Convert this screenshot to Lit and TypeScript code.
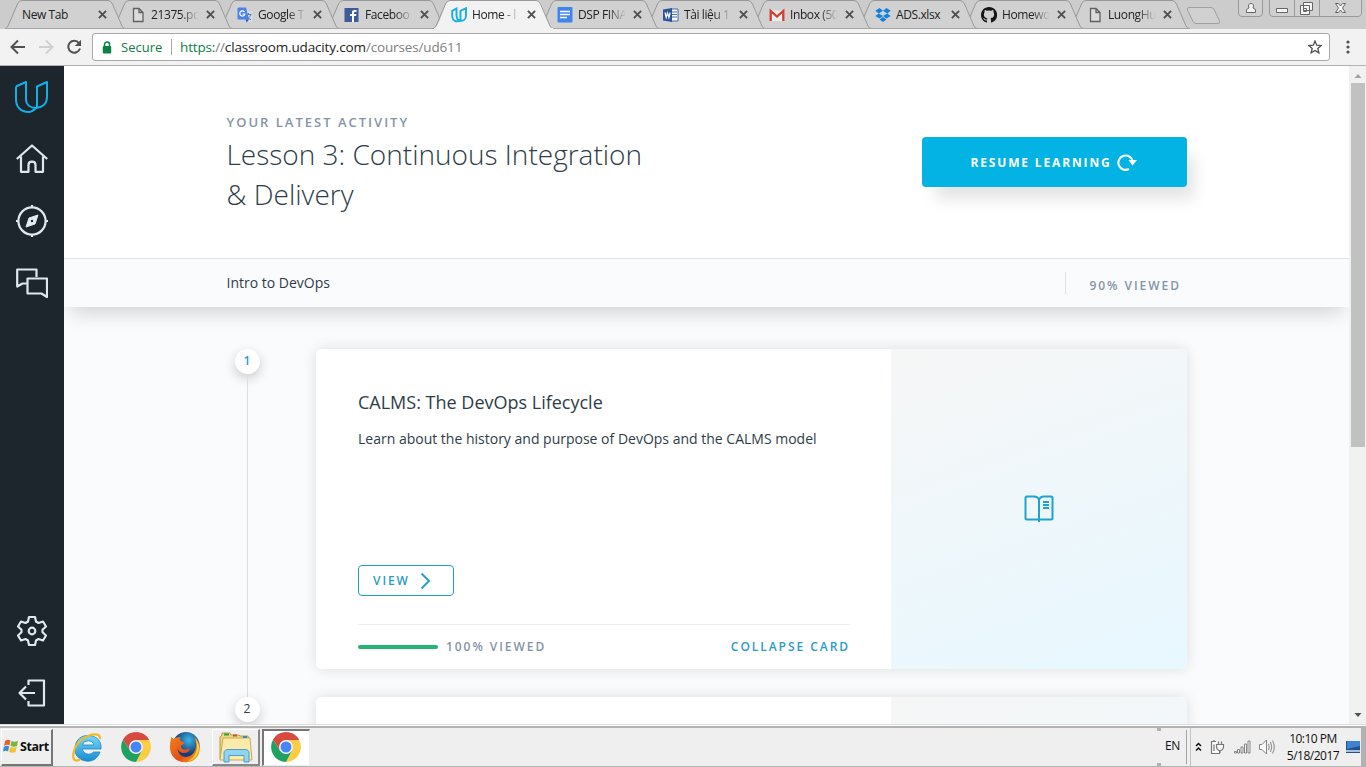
import { LitElement, html, svg, css } from "lit";
import { customElement } from "lit/decorators.js";
import { classMap } from "lit/directives/class-map.js";
import { styleMap } from "lit/directives/style-map.js";

const closeIcon = html`<svg width="9" height="9" viewBox="0 0 9 9"><path d="M.9 .9L8.1 8.1M8.1 .9L.9 8.1" stroke="#4f4f4f" stroke-width="1.9"/></svg>`;

const favicons = {
  page: svg`<path d="M3.500 1.500H9L13 5.500V14.500H3.500ZM9 1.500V5.500H13" fill="#dcdcdc" stroke="#616161" stroke-width="1.300"/>`,
  translate: svg`<path d="M6 4h8.500a1 1 0 0 1 1 1v10H9z" fill="#d5dce4"/><path d="M8.500 7.500h6M11.500 6v1.500M13.500 8c-.6 2-2.500 3.500-4 4.500M10 9c.8 2 2.400 3 4 3.700" stroke="#607d9b" fill="none"/><path d="M1.500 .5H9l3 12H1.500a1 1 0 0 1-1-1v-10z" fill="#4a83ee"/><path d="M8.500 12.500H12L9.700 15.500z" fill="#2757c0"/><path d="M7.400 4.800A2.600 2.600 0 1 0 7.900 7H5.500" stroke="#fff" stroke-width="1.200" fill="none"/>`,
  facebook: svg`<path d="M.5 1h14v14H.5z" fill="#3f5b99"/><path d="M8 15V9H6V7h2V5.500C8 3.700 9 3 10.500 3H12.500V5H11c-.7 0-1 .3-1 1v1h2.400L12 9H10v6z" fill="#fff"/>`,
  udacity: svg`<path d="M1.200 3.800L5.500 1.500V8.200Q5.600 13.600 10 13.600Q2 16 1.200 9.500ZM9.500 3.800L15 1.200V8.500C15 12.500 12 14.500 9.500 13.500Z" fill="none" stroke="#18b0dd" stroke-width="1.900"/>`,
  docs: svg`<rect x=".5" y="0" width="15" height="15.500" rx="1" fill="#4284ee"/><path d="M3 4.500h10M3 7.500h10M3 10.500h7" stroke="#fff" stroke-width="1.300"/>`,
  word: svg`<path d="M8 2h7v12H8z" fill="#fff" stroke="#3e6cb5"/><path d="M9 5h5M9 7.500h5M9 10h5" stroke="#3e6cb5"/><path d="M0 2.500L9 1v14L0 13.500z" fill="#2a5699"/><path d="M2 5.500L3.200 10.500L4.500 6L5.900 10.500L7.200 5.500" fill="none" stroke="#fff" stroke-width="1.200"/>`,
  gmail: svg`<path d="M1 3.500h14v10.500H1z" fill="#ececec"/><path d="M1.700 14V4L8 9.500L14.300 4V14" stroke="#d23f31" stroke-width="2.300" fill="none"/>`,
  dropbox: svg`<g fill="#1081de"><path d="M4.500 1L8 3.800L3.800 6.400L.3 3.700ZM11.500 1L8 3.800L12.200 6.400L15.700 3.700ZM.3 9L3.800 6.400L8 9L4.500 11.600ZM15.700 9L12.200 6.400L8 9L11.500 11.600ZM4.600 12.500L8 9.900L11.400 12.500L8 15Z"/></g>`,
  github: svg`<path fill="#161616" d="M8 0C3.580 0 0 3.580 0 8c0 3.540 2.290 6.530 5.470 7.590.4.070.55-.17.55-.38V13.500c-2.230.5-2.700-.9-2.700-.9-.4-.9-.9-1.200-.9-1.200-.7-.5.1-.5.1-.5.800.1 1.200.8 1.200.8.700 1.300 1.900.9 2.300.7.100-.5.300-.9.500-1.100-1.800-.2-3.600-.9-3.600-4 0-.9.300-1.600.8-2.200-.1-.2-.4-1 .1-2.100 0 0 .7-.2 2.200.8a7.600 7.600 0 0 1 4 0c1.500-1 2.200-.8 2.200-.8.400 1.100.2 1.900.1 2.100.5.600.8 1.300.8 2.200 0 3.100-1.900 3.700-3.700 3.900.3.300.6.800.6 1.500v2.500c0 .2.100.5.600.4A8 8 0 0 0 8 0z"/>`,
};

type Favicon = keyof typeof favicons;
interface Tab { label: string; icon?: Favicon; width: number; active?: boolean }

const tabs: Tab[] = [
  { label: "New Tab", width: 107 },
  { label: "21375.pc", icon: "page", width: 107 },
  { label: "Google T", icon: "translate", width: 107 },
  { label: "Faceboo", icon: "facebook", width: 107 },
  { label: "Home - l", icon: "udacity", width: 106, active: true },
  { label: "DSP FINA", icon: "docs", width: 106 },
  { label: "Tài liệu 1", icon: "word", width: 106 },
  { label: "Inbox (50", icon: "gmail", width: 106 },
  { label: "ADS.xlsx", icon: "dropbox", width: 106 },
  { label: "Homewo", icon: "github", width: 106 },
  { label: "LuongHu", icon: "page", width: 120 },
];

const sideIcons = {
  home: svg`<path d="M.8 16L16 2.500L31.200 16M5 13.500V28.800H12.500V22C12.500 17.500 19.500 17.500 19.500 22V28.800H27V13.500"/>`,
  compass: svg`<circle cx="16" cy="16" r="13.600"/><path d="M16 0V3M16 29V32M0 16H3M29 16H32"/><path d="M22 10L19 19L10 22L13 13Z" fill="#e6edf2" stroke-width="1"/><circle cx="16" cy="16" r="1.200" fill="#1d262d" stroke="none"/>`,
  chat: svg`<path d="M11 16.500H6.500L1.200 19.500V2.500H20.500V10M11.500 11.500H31V30L25.500 26.500H11.500Z"/>`,
  gear: svg`<path d="M13 2h6l1 4.500 2.500 1.500 4.500-1.500 3 5-3.500 3.200v2.600l3.500 3.200-3 5-4.500-1.500-2.500 1.500-1 4.500h-6l-1-4.500-2.500-1.500-4.500 1.500-3-5 3.500-3.200v-2.600l-3.500-3.200 3-5 4.500 1.500 2.500-1.500z"/><circle cx="16" cy="16" r="3.300"/>`,
  exit: svg`<path d="M12.500 8V3.500H28V28.500H12.500V24M19 16H4M10 9.500L3.500 16L10 22.500"/>`,
};
const sideIcon = (name: keyof typeof sideIcons) => html`<svg width="32" height="32" viewBox="0 0 32 32" fill="none" stroke="#e0e8ee" stroke-width="2.200" stroke-linejoin="round">${sideIcons[name]}</svg>`;

const chromeIcon = html`<svg width="30" height="30" viewBox="0 0 30 30"><path d="M15 15L2.100 7.500A15 15 0 0 1 27.900 7.500Z" fill="#d84a3f"/><path d="M15 8H28.200A15 15 0 0 1 15 30L21 18.500Z" fill="#fccd42"/><path d="M2.100 7.500L9 18.500L15 22L21 18.500L15 30A15 15 0 0 1 2.100 7.500" fill="#1fa160"/><path d="M2.100 7.500A15 15 0 0 1 28.200 8H15L9 18.500Z" fill="#d84a3f"/><circle cx="15" cy="15" r="7" fill="#f5f5f5"/><circle cx="15" cy="15" r="5.500" fill="#4587f4"/></svg>`;

const ieIcon = html`<svg width="32" height="32" viewBox="0 0 32 32"><defs><linearGradient id="ieb" x1="0" y1="0" x2="0" y2="1"><stop offset="0" stop-color="#75d7fa"/><stop offset="1" stop-color="#168dd2"/></linearGradient></defs><path d="M30 18H11.500C12 23 19 25 22.500 21H29C26.500 28 21 31 15 30C7 29 3 23 4 16C5 8 11 4 18 4.500C26 5 31 10.500 30 18ZM11.500 14H22.800C22 8.500 13 8.500 11.500 14Z" fill="url(#ieb)" stroke="#2386bf" stroke-width=".8"/><path d="M28.500 8C32 -1 6 3 2.500 22C1 31 6 30.500 9.500 28" fill="none" stroke="#efbb24" stroke-width="2.300"/></svg>`;

const firefoxIcon = html`<svg width="32" height="32" viewBox="0 0 32 32"><defs><radialGradient id="ffb" cx=".6" cy=".3"><stop offset="0" stop-color="#3eb5e8"/><stop offset="1" stop-color="#123e7e"/></radialGradient><linearGradient id="ffo" x1="0" y1="0" x2="1" y2="1"><stop offset="0" stop-color="#f08220"/><stop offset=".6" stop-color="#e34e16"/><stop offset="1" stop-color="#f9bd20"/></linearGradient></defs><circle cx="17" cy="14.500" r="13.500" fill="url(#ffb)"/><path d="M2 6L5 8C7 6 10 6 12 6.500C10 8 11 10 14 11C17 11.500 15 13 13 14C11 15 12 18 15 18.500C17.500 19 19 17 21 18C19 24 10 23 8.500 17C9 25 16 28 22 24.500C28 20 28.500 11 25 5.500C34 13 32.500 29 19 31C7 32.500 0 24 1 14C1 11 2 9 2 6Z" fill="url(#ffo)"/><path d="M26 7C34 15 30 28 19 30.500C27 26 30 17 26 7Z" fill="#f8cf32"/></svg>`;

const explorerIcon = html`<svg width="34" height="32" viewBox="0 0 34 32"><path d="M3 4V2H11L12 4H20L21 5H29L30 9V28H1V6Z" fill="#eed47d" stroke="#b69b45"/><path d="M4 7H31L33 29H1Z" fill="#fbeaa9" stroke="#c7ac57"/><path d="M5 3.500h5" stroke="#32a33d" stroke-width="2"/><path d="M14 4.500h4" stroke="#cb5137" stroke-width="2"/><path d="M24 6h4" stroke="#3d86c7" stroke-width="2"/><path d="M5 31V22C5 19.500 7 18.500 9 18.500H26C28.500 18.500 30 19.500 30 22V31H25V24.500H10V31Z" fill="#90d4ef" stroke="#4d9fc7"/></svg>`;

@customElement("app-root")
export class AppRoot extends LitElement {
  static styles = css`
    :host { display: flex; flex-direction: column; width: 1366px; height: 767px; overflow: hidden; background: #f2f2f2; font-family: "Open Sans", "Noto Sans", sans-serif; color: #2e3d49; }
    * { box-sizing: border-box; }
    svg { display: block; flex: none; }
    .strip { display: flex; height: 29px; padding-left: 5px; background: #cccccc; position: relative; z-index: 0; flex: none; }
    .tab { position: relative; height: 29px; display: flex; align-items: center; padding-left: 18px; color: #222; font-size: 12px; flex: none; }
    .shape { position: absolute; left: 0; top: 0; z-index: -1; }
    .tab.active { z-index: 50; }
    .fav { margin-right: 5px; }
    .label { width: 51px; height: 20px; line-height: 19px; white-space: nowrap; letter-spacing: -0.4px; mask-image: linear-gradient(90deg, #000 58%, transparent 94%); }
    .label.full { mask-image: none; }
    .label.plain { width: 72px; margin-left: -1px; mask-image: none; }
    .close { margin-left: 4px; }
    .newtab { margin: 6px 0 0 -3px; }
    .winctl { display: flex; margin-left: 16px; align-items: flex-start; }
    .toolbar { height: 37px; flex: none; display: flex; align-items: center; background: #f2f2f2; border-bottom: 1px solid #b3b3b3; padding: 0 10px; }
    .nav { display: flex; gap: 12px; width: 82px; }
    .omni { width: 1238px; height: 28px; border: 1px solid #a9a9a9; border-radius: 3px; background: #fff; display: flex; align-items: center; padding: 0 7px 0 9px; font-size: 13.500px; color: #808080; }
    .secure { color: #0b8043; margin-left: 9px; width: 50px; font-size: 13px; }
    .bar { width: 1px; height: 16px; background: #aaa; margin-right: 8px; }
    .url { flex: 1; letter-spacing: -0.15px; }
    .green { color: #0b8043; }
    .host { color: #222; }
    .menu { margin-left: 16px; }

    .view { height: 658px; flex: none; display: flex; overflow: hidden; background: #fafbfc; }
    .side { width: 64px; background: #1d262d; display: flex; flex-direction: column; align-items: center; padding: 13px 0 15px; flex: none; }
    .side .gap { flex: 1; }
    .logo { margin-right: 2px; }
    .home { margin-top: 28px; }
    .mid { margin-top: 30px; }
    .main { width: 1285px; overflow: hidden; flex: none; }
    .hero { height: 192px; background: #fff; display: flex; justify-content: space-between; align-items: flex-start; padding: 46px 162px 0 162.500px; }
    .eyebrow { font-size: 13px; font-weight: 600; letter-spacing: 2px; line-height: 20px; color: #8495a8; }
    h1 { margin: 2px 0 0; font-weight: 300; font-size: 28px; line-height: 40px; }
    .resume { margin-top: 25px; width: 265px; height: 50px; border-radius: 4px; background: #02b3e4; color: #fff; display: flex; align-items: center; justify-content: center; gap: 5px; padding-right: 2px; font-size: 12px; font-weight: 700; letter-spacing: 1.850px; box-shadow: 10px 15px 16px -3px rgba(0,0,0,.11); }
    .sub { height: 49px; border-top: 1px solid #dbe2e8; background: #fafbfd; display: flex; align-items: center; justify-content: space-between; padding: 0 168px 0 162.500px; font-size: 14px; box-shadow: 0 12px 20px -6px rgba(0,0,0,.16); }
    .course { padding-bottom: 2px; }
    .viewed { display: flex; align-items: center; height: 22px; border-left: 1px solid #dbe2e8; padding: 5px 0 0 23px; font-size: 12px; font-weight: 600; letter-spacing: 1.970px; color: #8495a8; }
    .lessons { display: grid; grid-template-columns: 26px 871px; column-gap: 56px; row-gap: 28px; padding: 42px 0 0 170px; }
    .step { display: flex; flex-direction: column; align-items: center; }
    .dot { width: 25px; height: 25px; border-radius: 50%; background: #fff; box-shadow: 0 4px 12px rgba(0,0,0,.2); text-align: center; line-height: 24px; font-size: 12px; flex: none; }
    .dot.on { color: #1f9ec9; font-weight: 600; }
    .line { width: 1px; flex: 1; margin-bottom: -28px; background: #dbdfe5; }
    .card { height: 320px; display: flex; background: #fff; border-radius: 5px; box-shadow: 0 0 14px rgba(0,0,0,.12); overflow: hidden; }
    .body { width: 575px; padding: 40px 42px 0; display: flex; flex-direction: column; align-items: flex-start; }
    h2 { margin: 0; font-size: 18px; line-height: 27px; font-weight: 400; }
    .desc { margin: 12px 0 0; font-size: 14px; line-height: 22px; white-space: nowrap; }
    .viewbtn { margin-top: 115px; width: 96px; height: 31px; border: 1px solid #1f9fc4; border-radius: 4px; display: flex; align-items: center; padding-left: 14px; gap: 10px; color: #2a9cc9; font-size: 12px; font-weight: 600; letter-spacing: 1.900px; }
    .foot { margin-top: 28px; width: 492px; height: 45px; border-top: 1px solid #eceef0; display: flex; align-items: center; padding-bottom: 1px; font-size: 12px; font-weight: 600; letter-spacing: 1.950px; color: #8495a8; }
    .progress { width: 80px; height: 4px; border-radius: 2px; margin: 1px 8px 0 0; background: #e5e8ec; }
    .fill { height: 4px; border-radius: 2px; background: #24b574; }
    .collapse { margin-left: auto; color: #2a9cc9; }
    .art { flex: 1; display: flex; align-items: center; justify-content: center; padding-bottom: 1px; background: linear-gradient(160deg, #f6f6f6, #e7f8ff); }
    .scroll { width: 17px; background: #f1f1f1; display: flex; flex-direction: column; align-items: center; padding: 7px 0 6px 1px; }
    .thumb { width: 14px; height: 364px; background: #c1c1c1; margin: 5px 0 auto; }

    .task { height: 43px; flex: none; display: flex; align-items: center; background: #efefef; border-top: 1px solid #dcdcdc; box-shadow: inset 0 1px #fff, inset 0 3px #b2b2b2, inset 0 -1px #b5b5b5; padding-top: 2px; color: #111; }
    .start { margin-left: 1px; width: 52px; height: 37px; border: 1px solid #fff; border-right: 2px solid #777; border-bottom: 2px solid #777; display: flex; align-items: center; gap: 1px; padding: 0 0 1px 1px; font-size: 12.500px; font-weight: 700; letter-spacing: -.45px; }
    .pins { display: flex; width: 131px; margin-left: 18px; gap: 18px; align-items: center; }
    .app { margin-left: 10px; width: 48px; height: 37px; border: 1px solid #fff; border-right: 2px solid #888; border-bottom: 2px solid #888; display: flex; align-items: center; justify-content: center; }
    .app.cur { margin-left: 2px; background: #fff; border: 1px solid #eee; border-left: 2px solid #777; border-top: 2px solid #777; padding: 0 1px 2px 0; }
    .tray { margin-left: auto; display: flex; align-items: center; height: 40px; width: 209px; font-size: 12px; background: linear-gradient(#b2b2b2, #b2b2b2) 0 1px / 4px 3px no-repeat, linear-gradient(#b2b2b2, #b2b2b2) 0 100% / 4px 4px no-repeat; }
    .lang { width: 21px; margin-left: 8px; letter-spacing: -.4px; padding-bottom: 4px; }
    .trayicons { display: flex; align-items: center; border-left: 1px solid #a5a5a5; height: 34px; padding-left: 3px; }
    .trayicons .inner { display: flex; align-items: center; gap: 8px; border-left: 1px solid #c5c5c5; height: 38px; padding-left: 4px; }
    .clock { margin-left: 9px; width: 58px; text-align: center; line-height: 17px; font-size: 12px; letter-spacing: -.5px; white-space: nowrap; }
    .desk { margin-left: auto; width: 20px; height: 38px; border-right: 5px solid #b2b2b2; display: flex; align-items: center; }
  `;

  private renderTab(t: Tab, i: number) {
    return html`<div class=${classMap({ tab: true, active: !!t.active })} style=${styleMap({ width: `${t.width}px`, zIndex: t.active ? "50" : `${20 - i}` })}>
      <svg class="shape" width="121" height="29" viewBox="0 0 121 29">
        <path d="M0 28.500C4 27 4.500 25 6 22L12 6Q14 .5 17 .5H104Q107 .5 109 6L115 22C117 27 118 28 121 28.500Z" fill=${t.active ? "#f2f2f2" : "#d1d1d1"}/>
        <path d="M0 28.500Q2 28 3 26L12.500 4Q14 .5 17 .5H103Q106 .5 107.500 4L117 26Q118 28 120 28.500" fill="none" stroke="#999" />
        ${t.active ? svg`<path d="M1 28.500H120" stroke="#f2f2f2"/>` : svg`<path d="M0 28.500H121" stroke="#a6a6a6"/>`}
      </svg>
      ${t.icon ? html`<svg class="fav" width="16" height="16" viewBox="0 0 16 16">${favicons[t.icon]}</svg>` : ""}
      <span class=${classMap({ label: true, plain: !t.icon, full: t.icon === "dropbox" })}>${t.label}</span>
      <span class="close">${closeIcon}</span>
    </div>`;
  }

  render() {
    return html`
      <div class="strip">
        ${tabs.map((t, i) => this.renderTab(t, i))}
        <svg class="newtab" width="36" height="19" viewBox="0 0 36 19"><path d="M3 1.500H25Q27 1.500 28 3.500L33.500 15Q34 17.500 32 17.500H10Q8 17.500 7 15.500L1.500 4Q1 1.500 3 1.500Z" fill="#d1d1d1" stroke="#a0a0a0"/></svg>
        <div class="winctl">
          <svg width="126" height="18" viewBox="0 0 126 18" fill="none" stroke="#999"><path d="M.5 0V13Q.5 16.500 4 16.500H21Q24.500 16.500 24.500 13V0M31.500 0V13Q31.500 16.500 35 16.500H119Q123.500 16.500 123.500 13V0M56.500 0V16M81.500 0V16" fill="#d0d0d0"/><g stroke="#666" fill="#f4f4f4"><path d="M8.500 12.500V10Q9 8.500 11 8Q9.500 3.500 13 3.500Q16.500 3.500 15 8Q17 8.500 17.500 10V12.500ZM38.500 8.500H49.500V12.500H38.500ZM65.500 2.500H74.500V10.500H65.500ZM62.500 5.500H71.500V14.500H62.500ZM65.500 8.500H68.500V11.500H65.500Z"/><path d="M97.500 3.500H100.500L102.500 6L104.500 3.500H107.500L104.500 8L107.500 12.500H104.500L102.500 10L100.500 12.500H97.500L100.500 8Z"/></g></svg>
        </div>
      </div>
      <div class="toolbar">
        <div class="nav">
          <svg width="16" height="16" viewBox="0 0 16 16"><path d="M15 8H2M8 1.500L1.500 8L8 14.500" fill="none" stroke="#505050" stroke-width="2"/></svg>
          <svg width="16" height="16" viewBox="0 0 16 16"><path d="M1 8H14M8 1.500L14.500 8L8 14.500" fill="none" stroke="#d0d0d0" stroke-width="2"/></svg>
          <svg width="16" height="16" viewBox="0 0 16 16"><path d="M13 4A6 6 0 1 0 14 9.500" fill="none" stroke="#505050" stroke-width="2"/><path d="M15 .8V7H8.800Z" fill="#505050"/></svg>
        </div>
        <div class="omni">
          <svg width="10" height="13" viewBox="0 0 10 13"><path d="M2.500 6V3.500a2.500 2.500 0 0 1 5 0V6" fill="none" stroke="#0b8043" stroke-width="1.500"/><rect x=".8" y="5" width="8.400" height="7.500" rx="1" fill="#0b8043"/></svg>
          <span class="secure">Secure</span><span class="bar"></span>
          <span class="url"><span class="green">https:</span>//<span class="host">classroom.udacity.com</span>/courses/ud611</span>
          <svg width="14" height="14" viewBox="0 0 14 14"><path d="M7 1L8.700 5.200L13.200 5.500L9.800 8.400L10.900 12.800L7 10.400L3.100 12.800L4.200 8.400L.8 5.500L5.300 5.200Z" fill="none" stroke="#505050" stroke-width="1.300"/></svg>
        </div>
        <svg class="menu" width="4" height="14" viewBox="0 0 4 14" fill="#505050"><circle cx="2" cy="2" r="1.600"/><circle cx="2" cy="7" r="1.600"/><circle cx="2" cy="12" r="1.600"/></svg>
      </div>

      <div class="view">
        <nav class="side">
          <svg class="logo" width="36" height="36" viewBox="0 0 36 36" fill="none" stroke="#12b0e5" stroke-width="2" stroke-linejoin="round"><path d="M3 7.500L13 3V20C13 26 17.500 29 23 29M3 7.500V20.500C3 28 8 33 15.500 33C19 33 21 31 23 29C29 28.500 34 25 34 18V3L24 7.500V28.500"/></svg>
          <div class="home">${sideIcon("home")}</div>
          <div class="mid">${sideIcon("compass")}</div>
          <div class="mid">${sideIcon("chat")}</div>
          <div class="gap"></div>
          <div>${sideIcon("gear")}</div>
          <div class="mid">${sideIcon("exit")}</div>
        </nav>
        <main class="main">
          <header class="hero">
            <div><div class="eyebrow">YOUR LATEST ACTIVITY</div><h1>Lesson 3: Continuous Integration<br>&amp; Delivery</h1></div>
            <div class="resume"><span>RESUME LEARNING</span><svg width="20" height="18" viewBox="0 0 20 18"><path d="M12 16A7.200 7.200 0 1 1 15.700 8.500" fill="none" stroke="#fff" stroke-width="2.100"/><path d="M11.500 7H20L15.500 12.500Z" fill="#fff"/></svg></div>
          </header>
          <div class="sub"><span class="course">Intro to DevOps</span><span class="viewed">90% VIEWED</span></div>
          <section class="lessons">
            <div class="step"><span class="dot on">1</span><span class="line"></span></div>
            <article class="card">
              <div class="body">
                <h2>CALMS: The DevOps Lifecycle</h2>
                <p class="desc">Learn about the history and purpose of DevOps and the CALMS model</p>
                <div class="viewbtn">VIEW <svg width="11" height="18" viewBox="0 0 11 18"><path d="M1.500 1.500L9 9L1.500 16.500" fill="none" stroke="#2a9fd0" stroke-width="2"/></svg></div>
                <div class="foot"><div class="progress"><div class="fill" style=${styleMap({ width: "100%" })}></div></div>100% VIEWED<span class="collapse">COLLAPSE CARD</span></div>
              </div>
              <div class="art"><svg width="30" height="28" viewBox="0 0 30 28" fill="none" stroke="#1fa4d0" stroke-width="2"><path d="M15 5Q14 1.500 10 1.500H3Q1.500 1.500 1.500 3V23Q1.500 24.500 3 24.500H27Q28.500 24.500 28.500 23V3Q28.500 1.500 27 1.500H20Q16 1.500 15 5V27M19 7H25M19 10H25M19 13H25"/></svg></div>
            </article>
            <div class="step"><span class="dot">2</span><span class="line"></span></div>
            <article class="card"><div class="body"></div><div class="art"></div></article>
          </section>
        </main>
        <div class="scroll">
          <svg width="8" height="5" viewBox="0 0 8 5"><path d="M.5 5L4 1L7.500 5Z" fill="#a3a3a3"/></svg>
          <div class="thumb"></div>
          <svg width="8" height="5" viewBox="0 0 8 5"><path d="M.5 0L4 4L7.500 0Z" fill="#505050"/></svg>
        </div>
      </div>

      <footer class="task">
        <div class="start"><svg width="16" height="16" viewBox="0 0 16 16"><path d="M2 3Q5 1 7.500 2.500L6.500 7.500Q4 6 1 8Z" fill="#e9622a"/><path d="M8.500 3Q11 4.500 15 3L14 8Q11 9.500 7.500 8Z" fill="#76b83b"/><path d="M.8 9Q3.500 7 6.200 8.500L5 13.500Q3 12 0 13.500Z" fill="#3c8bd3"/><path d="M7.300 9Q10 10.500 13.700 9L12.500 14Q9.500 15.500 6 14Z" fill="#f5c12e"/></svg><span>Start</span></div>
        <div class="pins">${ieIcon}${chromeIcon}${firefoxIcon}</div>
        <div class="app">${explorerIcon}</div>
        <div class="app cur">${chromeIcon}</div>
        <div class="tray">
          <span class="lang">EN</span>
          <div class="trayicons"><div class="inner">
            <svg width="7" height="10" viewBox="0 0 7 10"><path d="M1 4L3.500 1.500L6 4M1 8.500L3.500 6L6 8.500" fill="none" stroke="#111" stroke-width="1.500"/></svg>
            <svg width="16" height="16" viewBox="0 0 16 16"><path d="M6 2.500H1.500V14.500H9.500V12M4 1V2.500M4 5.500V12M6.500 5.500H13.500V8Q13 11.500 10 11.500Q7 11.500 6.500 8ZM8.500 2.500V5M11.500 2.500V5M10 11.500V14" fill="#fafafa" stroke="#777" stroke-width="1.200"/></svg>
            <svg width="17" height="14" viewBox="0 0 17 14"><path d="M.5 11.500h2v1.500h-2zM3.500 9.500h2v3.500h-2zM7 7h2v6h-2zM10.500 4h2v9h-2zM14 1h2v12h-2z" fill="#fafafa" stroke="#858585"/></svg>
            <svg width="16" height="16" viewBox="0 0 16 16" fill="#fafafa" stroke="#858585"><path d="M.5 5.500H3L7.500 1V15L3 10.500H.5Z"/><path d="M9.500 5Q11 8 9.500 11M11.500 3Q14 8 11.500 13M13.500 1.500Q17 8 13.500 14.500" fill="none"/></svg>
          </div></div>
          <div class="clock">10:10 PM<br>5/18/2017</div>
          <div class="desk"><svg width="14" height="14" viewBox="0 0 14 14"><path d="M0 1H14V13H0Z" fill="#24518e"/><path d="M1 1H14V6L1 9Z" fill="#3e83d0"/><path d="M0 11H14" stroke="#dbe5f0" stroke-width="1.500"/></svg></div>
        </div>
      </footer>`;
  }
}
